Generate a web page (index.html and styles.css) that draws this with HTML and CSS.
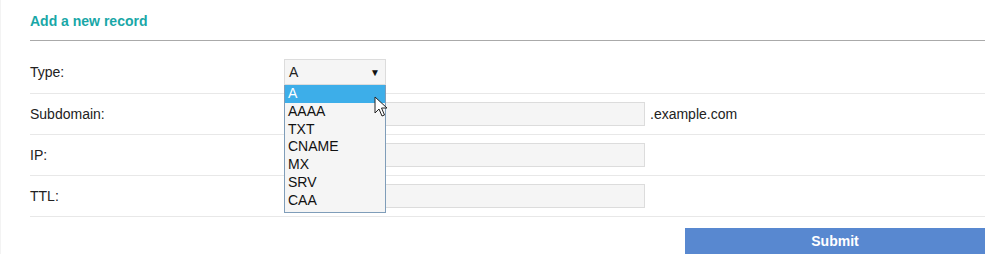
FILE: index.html
```html
<!DOCTYPE html>
<html lang="en">
<head>
    <meta charset="UTF-8">
    <meta name="viewport" content="width=device-width, initial-scale=1.0">
    <title>Add a new record</title>
    <link rel="stylesheet" href="styles.css">
</head>
<body>
    <div class="panel">
        <h2 class="title">Add a new record</h2>
        <form class="record-form" action="#" method="post">
            <div class="form-row">
                <label>Type:</label>
                <div class="field">
                    <div class="select-wrap">
                        <div class="select">
                            <span>A</span>
                            <span class="arrow">&#9660;</span>
                        </div>
                        <ul class="options">
                            <li class="active">A</li>
                            <li>AAAA</li>
                            <li>TXT</li>
                            <li>CNAME</li>
                            <li>MX</li>
                            <li>SRV</li>
                            <li>CAA</li>
                        </ul>
                        <svg class="cursor" width="14" height="22" viewBox="0 0 14 22">
                            <path d="M1 1 L1 17 L5 13 L8 20 L10.5 19 L7.5 12 L13 12 Z" fill="#fff" stroke="#222" stroke-width="1" stroke-linejoin="round"/>
                        </svg>
                    </div>
                </div>
            </div>
            <div class="form-row">
                <label for="subdomain">Subdomain:</label>
                <div class="field">
                    <input type="text" id="subdomain" class="text-input">
                    <span class="suffix">.example.com</span>
                </div>
            </div>
            <div class="form-row">
                <label for="ip">IP:</label>
                <div class="field">
                    <input type="text" id="ip" class="text-input">
                </div>
            </div>
            <div class="form-row">
                <label for="ttl">TTL:</label>
                <div class="field">
                    <input type="text" id="ttl" class="text-input">
                </div>
            </div>
            <div class="actions">
                <button type="submit" class="submit">Submit</button>
            </div>
        </form>
    </div>
</body>
</html>
```

FILE: styles.css
```css
body {
    margin: 0;
    padding: 0;
    background-color: #fff;
    font-family: "Liberation Sans", Arial, sans-serif;
    font-size: 14px;
    color: #222;
}

.panel {
    padding: 0 15px 0 30px;
    box-shadow: inset 1px 0 #f3f3f3;
}

.title {
    margin: 0;
    padding: 13px 0 11px;
    line-height: 16px;
    font-size: 14px;
    font-weight: bold;
    color: #19a7a7;
    border-bottom: 1px solid #aaa;
}

.record-form {
    margin-top: 10px;
}

.form-row {
    display: grid;
    grid-template-columns: 254px 1fr;
    align-items: center;
    padding: 8px 0;
    border-bottom: 1px solid #e8e8e8;
}

.form-row label {
    line-height: 16px;
}

.field {
    display: flex;
    align-items: center;
}

.select-wrap {
    position: relative;
}

.select {
    display: flex;
    justify-content: space-between;
    align-items: center;
    box-sizing: border-box;
    width: 102px;
    height: 26px;
    padding: 0 5px 0 4px;
    background-color: #f5f5f5;
    border: 1px solid #dcdcdc;
}

.arrow {
    font-size: 10px;
    color: #111;
}

.options {
    position: absolute;
    top: 100%;
    left: 0;
    z-index: 2;
    box-sizing: border-box;
    width: 102px;
    margin: 0;
    padding: 0 0 3px;
    list-style: none;
    background-color: #f5f5f5;
    border: 1px solid #7f9db9;
    border-top: none;
}

.options li {
    height: 17.75px;
    line-height: 17px;
    padding-left: 3px;
    color: #111;
}

.options li.active {
    background-color: #3daee9;
    color: #fff;
}

.cursor {
    position: absolute;
    top: 37px;
    left: 90px;
    z-index: 3;
}

.text-input {
    box-sizing: border-box;
    width: 361px;
    height: 24px;
    margin: 0;
    padding: 0 4px;
    background-color: #f5f5f5;
    border: 1px solid #dcdcdc;
    font-family: inherit;
    font-size: 14px;
}

.suffix {
    margin-left: 5px;
}

.actions {
    display: flex;
    justify-content: flex-end;
    margin-top: 11px;
}

.submit {
    width: 300px;
    height: 26px;
    border: none;
    background-color: #5888d0;
    color: #fff;
    font-family: inherit;
    font-size: 14px;
    font-weight: bold;
    cursor: pointer;
}
```
